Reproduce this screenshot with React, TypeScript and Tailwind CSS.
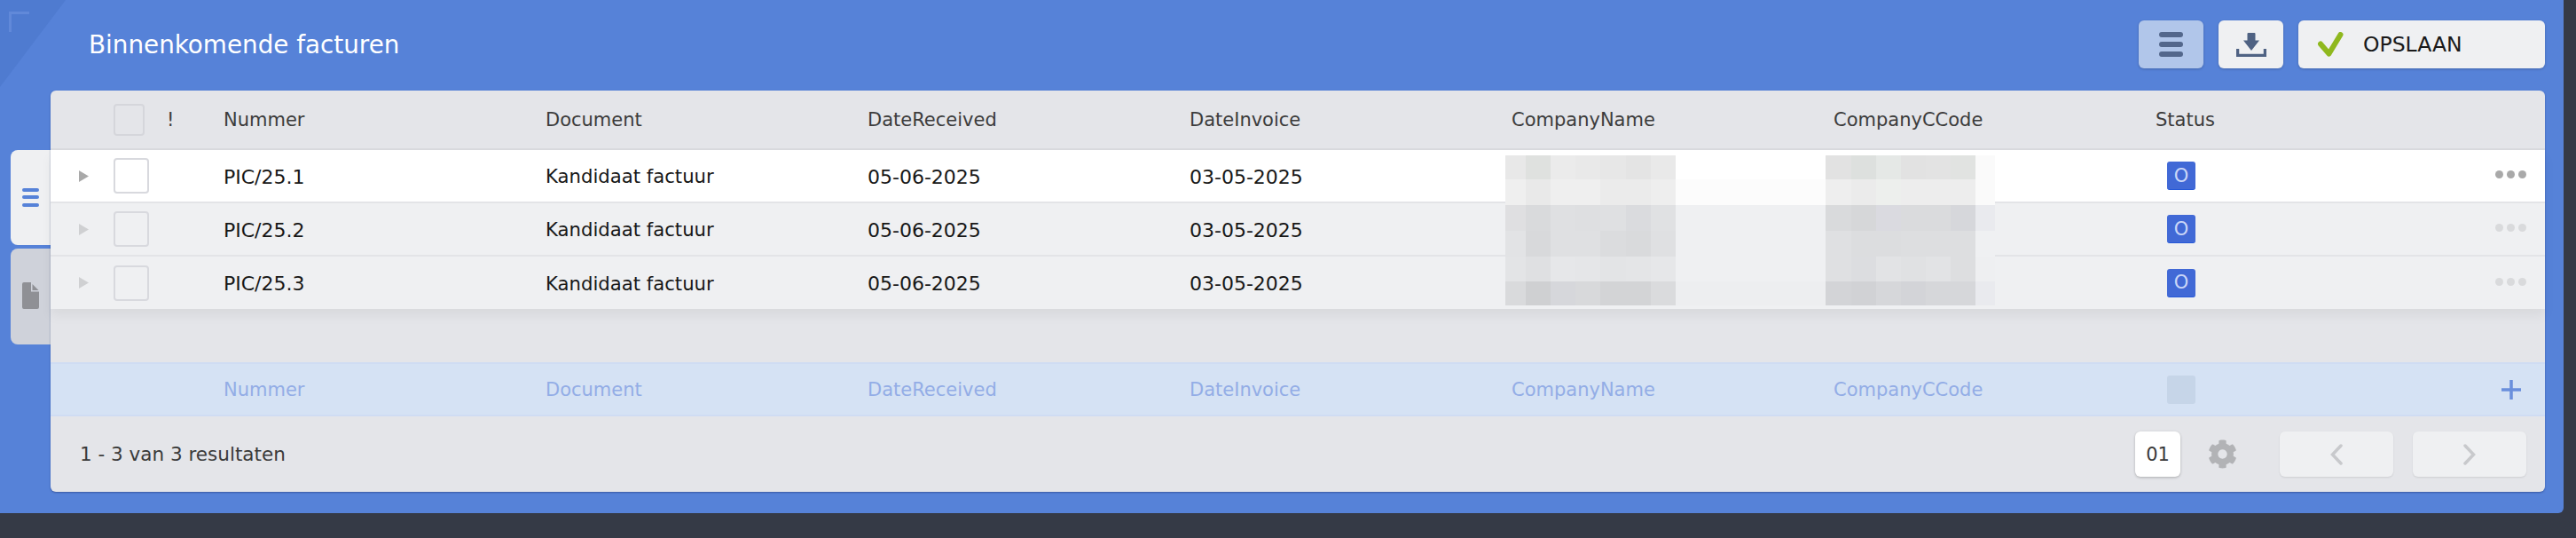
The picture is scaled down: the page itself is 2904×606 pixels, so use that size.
import React from "react";
import { FaCog } from "react-icons/fa";

const cols = ["Nummer", "Document", "DateReceived", "DateInvoice", "CompanyName", "CompanyCCode"];
const rows = [
  { n: "PIC/25.1", active: true },
  { n: "PIC/25.2", active: false },
  { n: "PIC/25.3", active: false },
];
const rowH = [27, 29, 29, 29, 28, 27];
const w1 = [23, 28, 28, 28, 29, 28, 28];
const w2 = [29, 28, 28, 28, 28, 28, 22];
const b1 = [
  ["#e8e8e8", "#dfe1df", "#ebebeb", "#e9e9e9", "#e7e7e7", "#e4e4e4", "#e9e9e9"],
  ["#efefef", "#e9e9e9", "#efefef", "#efefef", "#ebebeb", "#ebebeb", "#eeeeee"],
  ["#dfdfe1", "#d9dadc", "#dfe0e2", "#dedfe1", "#dfe0e2", "#dadbde", "#e0e1e3"],
  ["#e2e3e5", "#d8d9db", "#dfe0e2", "#dfe0e2", "#dbdcde", "#d9dadc", "#dfe0e2"],
  ["#e3e4e6", "#dfe0e2", "#e6e7e9", "#e5e6e8", "#e3e4e6", "#e4e5e7", "#e6e7e9"],
  ["#d9dadc", "#cfd0d2", "#d6d7db", "#d8d9db", "#d3d4d6", "#d3d4d6", "#dadbdd"],
];
const b2 = [
  ["#e2e2e2", "#dde0de", "#e5e8e6", "#e2e2e2", "#e3e3e3", "#e1e3e1", "#fafafa"],
  ["#eeeeee", "#ebebeb", "#edefed", "#ededed", "#ededed", "#ededed", "#fafafa"],
  ["#d9dadc", "#d6d7d9", "#dadae0", "#dadbdd", "#dadbdd", "#d6d7db", "#e9eaee"],
  ["#dfe0e2", "#dcdddf", "#dcdddf", "#dddee0", "#dddee0", "#dddee0", "#eff0f2"],
  ["#dfe0e2", "#dcdde0", "#e2e3e5", "#e0e1e3", "#e2e3e5", "#dddee0", "#eeeff1"],
  ["#d3d4d7", "#d1d2d5", "#d6d7da", "#d3d4d8", "#d6d7da", "#d6d7da", "#e9eaee"],
];
const mid = ["#ffffff", "#fcfcfc", "#eff0f2", "#eff0f2", "#eff0f2", "#edeef0"];

function Mosaic({ data, widths }: { data: string[][]; widths: number[] }) {
  return (
    <div className="flex flex-col">
      {data.map((r, i) => (
        <div key={i} className="flex" style={{ height: rowH[i] }}>
          {r.map((c, j) => (
            <div key={j} style={{ width: widths[j], background: c }} />
          ))}
        </div>
      ))}
    </div>
  );
}

export default function App() {
  return (
    <div className="h-[606px] w-[2904px] bg-[#353a46] overflow-hidden font-['DejaVu_Sans',sans-serif] text-[21px]">
      <div className="relative h-[578px] w-[2890px] bg-[#5682d8] rounded-br-[6px] flex flex-col">
        <svg className="absolute left-0 top-0" width="76" height="100" viewBox="0 0 76 100">
          <polygon points="0,0 74,0 0,98" fill="#4f7bd0" />
          <path d="M33 14.500H11.500V36" fill="none" stroke="#6189d9" strokeWidth="3" />
        </svg>

        {/* top bar */}
        <div className="relative h-[102px] flex items-start pt-[23px] pl-[100px] pr-[21px]">
          <h1 className="text-[27.800px] leading-[54px] pt-[1px] text-white font-normal flex-1">Binnenkomende facturen</h1>
          <div className="flex gap-[17px] h-[54px]">
            <button className="w-[73px] rounded-[6px] bg-[#b1c6ea] shadow-[0_1px_3px_rgba(0,0,0,0.2)] flex items-center justify-center">
              <div className="w-[27px] flex flex-col gap-[5px]">
                <span className="block h-[6px] rounded-full bg-[#53678c]" />
                <span className="block h-[6px] rounded-full bg-[#53678c]" />
                <span className="block h-[6px] rounded-full bg-[#53678c]" />
              </div>
            </button>
            <button className="w-[73px] rounded-[6px] bg-[#eff0f2] shadow-[0_1px_3px_rgba(0,0,0,0.2)] flex items-center justify-center">
              <svg width="34" height="27" viewBox="0 0 34 27">
                <path d="M12.500 1a1 1 0 0 1 1-1h7a1 1 0 0 1 1 1v7.500H26L17 20 8 8.500h4.500z" fill="#4f6283" />
                <path d="M1.500 18v7.500h31V18" fill="none" stroke="#4f6283" strokeWidth="3.500" />
              </svg>
            </button>
            <button className="w-[278px] rounded-[6px] bg-[#eff0f2] shadow-[0_1px_3px_rgba(0,0,0,0.2)] flex items-center pl-[22px] text-[#1a1a1a]">
              <svg width="29" height="28" viewBox="0 0 29 28">
                <path d="M3 13.500L12.500 24.500L25.500 3" fill="none" stroke="#8fb81e" strokeWidth="6" strokeLinecap="round" strokeLinejoin="round" />
              </svg>
              <span className="ml-[22px] text-[23.500px] pt-[1px]">OPSLAAN</span>
            </button>
          </div>
        </div>

        <div className="relative flex flex-1">
          {/* tabs */}
          <div className="w-[57px] pl-[12px] pt-[67px] flex flex-col gap-[4px] shrink-0">
            <div className="h-[107px] rounded-l-[8px] bg-[#eff0f2] flex items-center pl-[13px]">
              <div className="w-[19px] flex flex-col gap-[4.500px] -mt-[1px]">
                <span className="block h-[4px] rounded-full bg-[#5682d8]" />
                <span className="block h-[4px] rounded-full bg-[#5682d8]" />
                <span className="block h-[4px] rounded-full bg-[#5682d8]" />
              </div>
            </div>
            <div className="h-[108px] rounded-l-[8px] bg-[#cfd2da] flex items-center pl-[13px]">
              <svg width="19" height="30" viewBox="0 0 19 30" className="-mt-[3px]">
                <path d="M2 0h8v10.500h9V28a2 2 0 0 1-2 2H2a2 2 0 0 1-2-2V2a2 2 0 0 1 2-2z" fill="#8f9095" />
                <path d="M11.500 2l7 7h-7z" fill="#8f9095" />
              </svg>
            </div>
          </div>

          {/* card */}
          <div className="relative w-[2812px] h-[452px] bg-[#e4e5e9] rounded-[6px] shadow-[0_1px_2px_rgba(30,50,110,0.5)] flex flex-col">
            <div className="h-[67px] flex items-center border-b-2 border-[#d9dade] text-[#3c3c3c]">
              <div className="w-[195px] pl-[71px] flex items-center shrink-0">
                <span className="w-[35px] h-[36px] rounded-[4px] border-2 border-[#d5d6db]" />
                <span className="ml-[25px] pt-[2px]">!</span>
              </div>
              {cols.map((c) => (
                <div key={c} className="w-[363px] shrink-0 pt-[2px]">{c}</div>
              ))}
              <div className="pt-[2px]">Status</div>
            </div>

            <div className="relative shadow-[0_8px_12px_rgba(0,0,0,0.05)]">
              {rows.map((r, i) => (
                <div
                  key={r.n}
                  className={`flex items-center text-[#171717] ${i < 2 ? "h-[60px] border-b-2 border-[#e3e4e7]" : "h-[59px]"} ${r.active ? "bg-white" : "bg-[#eff0f2]"}`}
                >
                  <div className="w-[195px] pl-[32px] flex items-center shrink-0">
                    <svg width="11" height="13" viewBox="0 0 11 13">
                      <polygon points="0,0 11,6.500 0,13" fill={r.active ? "#a9a9a9" : "#cfd0d2"} />
                    </svg>
                    <span className={`ml-[28px] w-[40px] h-[40px] rounded-[4px] border-2 border-[#d8d9de] ${r.active ? "bg-white" : "bg-[#eff0f2]"}`} />
                  </div>
                  <div className="w-[363px] shrink-0 pt-[2px] text-[22px]">{r.n}</div>
                  <div className="w-[363px] shrink-0 pt-[2px] text-[21.200px]">Kandidaat factuur</div>
                  <div className="w-[363px] shrink-0 pt-[2px] text-[22px]">05-06-2025</div>
                  <div className="w-[363px] shrink-0 pt-[2px] text-[22px]">03-05-2025</div>
                  <div className="w-[726px] shrink-0" />
                  <div className="pl-[13px] w-[100px] shrink-0">
                    <span className="flex w-[32px] h-[32px] pt-[2px] items-center justify-center rounded-[3px] bg-[#4169d6] border-b border-[#2558d8] text-[#c9d5f7]">O</span>
                  </div>
                  <div className="flex-1 flex justify-end pr-[21px] gap-[4px] -mt-[3px]">
                    {[0, 1, 2].map((d) => (
                      <span key={d} className={`w-[9px] h-[9px] rounded-full ${r.active ? "bg-[#a9a9a9]" : "bg-[#d9dadc]"}`} />
                    ))}
                  </div>
                </div>
              ))}
              <div className="absolute left-[1640px] top-[6px] flex">
                <Mosaic data={b1} widths={w1} />
                <div className="flex flex-col w-[169px]">
                  {mid.map((c, i) => (
                    <div key={i} style={{ height: rowH[i], background: c }} />
                  ))}
                </div>
                <Mosaic data={b2} widths={w2} />
              </div>
            </div>

            <div className="h-[60px] shrink-0" />

            {/* new row */}
            <div className="h-[61px] flex items-center bg-[#d5e2f4] border-y-2 border-[#cfdcf3] text-[#93ade6]">
              <div className="w-[195px] shrink-0" />
              {cols.map((c) => (
                <div key={c} className="w-[363px] shrink-0 pt-[2px]">{c}</div>
              ))}
              <div className="pl-[13px] w-[100px] shrink-0">
                <span className="block w-[32px] h-[32px] rounded-[3px] bg-[#c6d5e8]" />
              </div>
              <div className="flex-1 flex justify-end pr-[27px]">
                <svg width="22" height="24" viewBox="0 0 22 24">
                  <path d="M11 1v22M0 12h22" stroke="#6a8fdc" strokeWidth="3.500" fill="none" />
                </svg>
              </div>
            </div>

            {/* footer */}
            <div className="flex-1 flex items-center pl-[33px] pr-[21px] text-[#3a3a3a]">
              <div className="flex-1 pt-[2px] text-[21.500px]">1 - 3 van 3 resultaten</div>
              <div className="w-[51px] h-[51px] rounded-[6px] bg-white shadow-[0_1px_3px_rgba(0,0,0,0.25)] flex items-center justify-center pt-[2px]">01</div>
              <FaCog className="ml-[31px] text-[#b2b3b6]" size={33} />
              <button className="ml-[48px] w-[128px] h-[51px] rounded-[6px] bg-[#eff0f2] shadow-[0_1px_2px_rgba(0,0,0,0.1)] flex items-center justify-center">
                <svg width="14" height="24" viewBox="0 0 14 24"><path d="M12 2L2.500 12 12 22" fill="none" stroke="#c8c9cc" strokeWidth="3.500" strokeLinecap="round" /></svg>
              </button>
              <button className="ml-[22px] w-[128px] h-[51px] rounded-[6px] bg-[#eff0f2] shadow-[0_1px_2px_rgba(0,0,0,0.1)] flex items-center justify-center">
                <svg width="14" height="24" viewBox="0 0 14 24"><path d="M2 2l9.500 10L2 22" fill="none" stroke="#c8c9cc" strokeWidth="3.500" strokeLinecap="round" /></svg>
              </button>
            </div>
          </div>
        </div>
      </div>
    </div>
  );
}
